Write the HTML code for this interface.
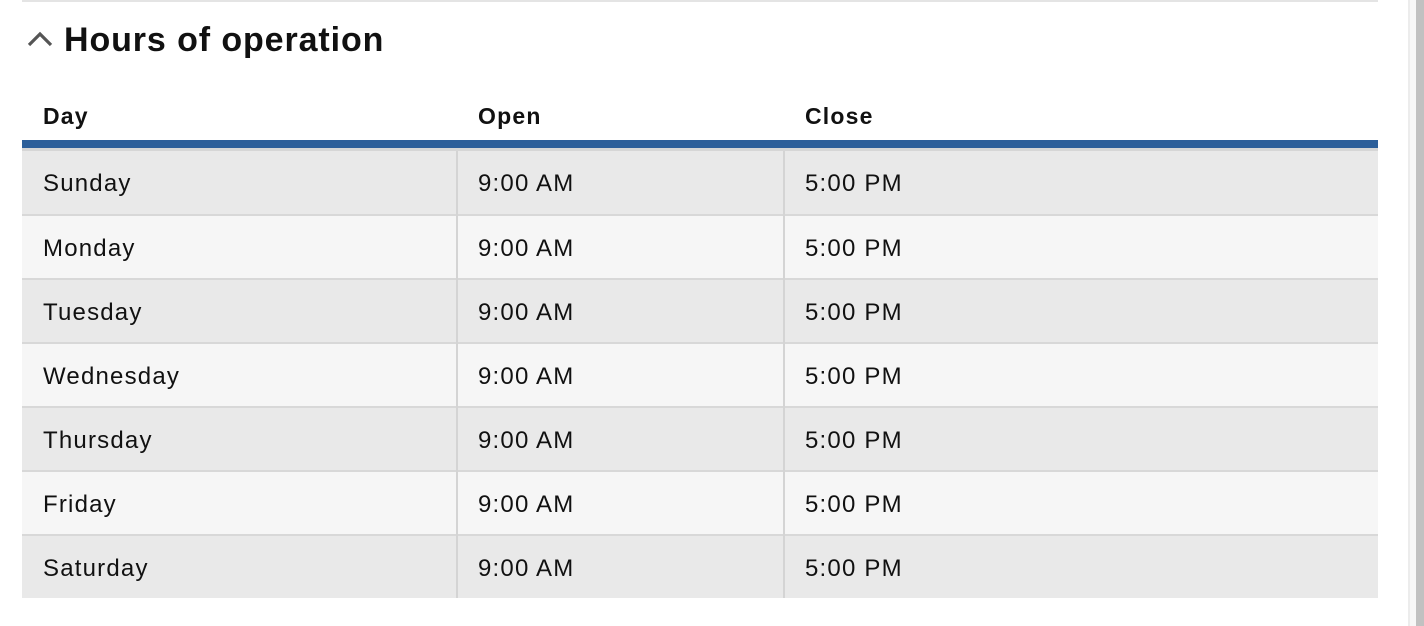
<!DOCTYPE html>
<html><head><style>
*{margin:0;padding:0;box-sizing:border-box}
body{width:1424px;height:626px;background:#fff;position:relative;overflow:hidden;font-family:"Liberation Sans",sans-serif;color:#111}
.topline{position:absolute;left:22px;top:0;width:1356px;height:2px;background:#e4e4e4}
.title{position:absolute;left:64px;top:19px;font-size:34px;font-weight:bold;line-height:42px;letter-spacing:0.9px}
.chev{position:absolute;left:27px;top:30px}
.hdr{position:absolute;top:101px;font-size:23px;font-weight:bold;letter-spacing:1.2px;line-height:30px}
.blue{position:absolute;left:22px;top:140px;width:1356px;height:8px;background:#2d5f9a}
.gl{position:absolute;left:22px;top:148px;width:1356px;height:3px;background:#d6d6d6}
.row{position:absolute;left:22px;width:1356px;height:64px;border-top:2px solid #d8d8d8}
.row.f{border-top:none;height:64px}
.row span{position:absolute;top:2px;height:62px;line-height:62px;font-size:24px;letter-spacing:1.2px}
.vl{position:absolute;top:151px;width:2px;height:447px;background:#d4d4d4}
.sb{position:absolute;left:1408px;top:0;width:2px;height:626px;background:#ececec}
.sb2{position:absolute;left:1410px;top:0;width:6px;height:626px;background:#f7f7f7}
.sb3{position:absolute;left:1416px;top:0;width:8px;height:626px;background:#c1c1c1}
</style></head><body>
<div class="topline"></div>
<svg class="chev" width="26" height="18" viewBox="0 0 26 18"><path d="M2 15 L13 4 L24 15" fill="none" stroke="#555" stroke-width="3.2"/></svg>
<div class="title">Hours of operation</div>
<div class="hdr" style="left:43px">Day</div>
<div class="hdr" style="left:478px">Open</div>
<div class="hdr" style="left:805px">Close</div>
<div class="blue"></div><div class="gl"></div>
<div class="row f" style="top:151px;background:#e9e9e9"><span style="left:21px">Sunday</span><span style="left:456px">9:00 AM</span><span style="left:783px">5:00 PM</span></div>
<div class="row" style="top:214px;background:#f6f6f6"><span style="left:21px">Monday</span><span style="left:456px">9:00 AM</span><span style="left:783px">5:00 PM</span></div>
<div class="row" style="top:278px;background:#e9e9e9"><span style="left:21px">Tuesday</span><span style="left:456px">9:00 AM</span><span style="left:783px">5:00 PM</span></div>
<div class="row" style="top:342px;background:#f6f6f6"><span style="left:21px">Wednesday</span><span style="left:456px">9:00 AM</span><span style="left:783px">5:00 PM</span></div>
<div class="row" style="top:406px;background:#e9e9e9"><span style="left:21px">Thursday</span><span style="left:456px">9:00 AM</span><span style="left:783px">5:00 PM</span></div>
<div class="row" style="top:470px;background:#f6f6f6"><span style="left:21px">Friday</span><span style="left:456px">9:00 AM</span><span style="left:783px">5:00 PM</span></div>
<div class="row" style="top:534px;background:#e9e9e9"><span style="left:21px">Saturday</span><span style="left:456px">9:00 AM</span><span style="left:783px">5:00 PM</span></div>
<div class="vl" style="left:456px"></div>
<div class="vl" style="left:783px"></div>
<div class="sb"></div><div class="sb2"></div><div class="sb3"></div>
</body></html>
